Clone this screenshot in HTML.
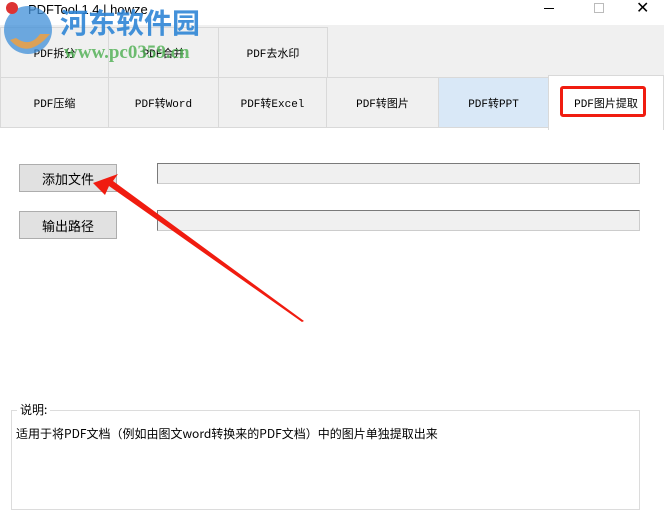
<!DOCTYPE html>
<html><head><meta charset="utf-8"><style>
*{margin:0;padding:0;box-sizing:border-box}
body{width:664px;height:491px;overflow:hidden;background:#fff;font-family:"Liberation Mono","Noto Sans CJK SC",monospace;position:relative}
.a{position:absolute}
.tab{position:absolute;background:#f0f0f0;border:1px solid #d9d9d9;font-size:11px;display:flex;align-items:center;justify-content:center;color:#000}
.btn{position:absolute;background:#e1e1e1;border:1px solid #adadad;font-size:13px;display:flex;align-items:center;justify-content:center;font-family:"Liberation Sans","Noto Sans CJK SC",sans-serif}
.tb{position:absolute;background:#f0f0f0;border:1px solid #7a7a7a;border-right:1px solid #ccc;border-bottom:1px solid #ccc}
</style></head><body>
<div class="a" style="left:0;top:0;width:664px;height:25px;background:#fff"></div>
<div class="a" style="left:28px;top:2px;font-size:13px;font-family:'Liberation Sans',sans-serif;color:#000">PDFTool 1.4 | howze</div>
<div class="a" style="left:544px;top:8px;width:10px;height:1px;background:#000"></div>
<div class="a" style="left:594px;top:3px;width:10px;height:10px;border:1px solid #bbb"></div>
<div class="a" style="left:636px;top:-2px;font-size:16px;font-family:'Liberation Sans',sans-serif">✕</div>
<div class="a" style="left:0;top:25px;width:664px;height:103px;background:#f0f0f0"></div>
<div class="tab" style="left:0;top:27px;width:109px;height:51px">PDF拆分</div>
<div class="tab" style="left:108px;top:27px;width:111px;height:51px">PDF合并</div>
<div class="tab" style="left:218px;top:27px;width:110px;height:51px">PDF去水印</div>
<div class="tab" style="left:0;top:77px;width:109px;height:51px">PDF压缩</div>
<div class="tab" style="left:108px;top:77px;width:111px;height:51px">PDF转Word</div>
<div class="tab" style="left:218px;top:77px;width:109px;height:51px">PDF转Excel</div>
<div class="tab" style="left:326px;top:77px;width:113px;height:51px">PDF转图片</div>
<div class="tab" style="left:438px;top:77px;width:111px;height:51px;background:#d9e8f7">PDF转PPT</div>
<div class="tab" style="left:548px;top:75px;width:116px;height:55px;background:#fff;border-bottom:none">PDF图片提取</div>
<div class="a" style="left:560px;top:86px;width:86px;height:31px;border:3px solid #f01c10;border-radius:3px"></div>
<svg class="a" style="left:0;top:0" width="60" height="62"><circle cx="28" cy="30" r="24" fill="#3f8fd8" opacity=".75"/><path d="M10 40 Q28 60 50 34 L40 34 Q30 48 16 38Z" fill="#f0a040" opacity=".85"/><circle cx="12" cy="8" r="6" fill="#d33"/></svg>
<div class="a" style="left:60px;top:4px;font-size:28px;font-weight:bold;color:#2f86d6;font-family:'Noto Sans CJK SC',sans-serif;line-height:36px;opacity:.9">河东软件园</div>
<div class="a" style="left:64px;top:42px;font-size:19px;font-weight:bold;color:#4caf50;font-family:'Liberation Serif',serif;opacity:.8">www.pc0359.cn</div>
<div class="btn" style="left:19px;top:164px;width:98px;height:28px">添加文件</div>
<div class="btn" style="left:19px;top:211px;width:98px;height:28px">输出路径</div>
<div class="tb" style="left:157px;top:163px;width:483px;height:21px"></div>
<div class="tb" style="left:157px;top:210px;width:483px;height:21px"></div>
<svg class="a" style="left:0;top:0" width="664" height="491"><polygon points="93,183 118,174 113,181 304,321 302,322 109,186 105,195" fill="#f01c10"/></svg>
<div class="a" style="left:11px;top:410px;width:629px;height:100px;border:1px solid #dcdcdc"></div>
<div class="a" style="left:17px;top:401px;background:#fff;padding:0 3px;font-size:12px;font-family:'Noto Sans CJK SC',sans-serif">说明:</div>
<div class="a" style="left:16px;top:425px;font-size:12px;font-family:'Noto Sans CJK SC',sans-serif">适用于将PDF文档（例如由图文word转换来的PDF文档）中的图片单独提取出来</div>
</body></html>
